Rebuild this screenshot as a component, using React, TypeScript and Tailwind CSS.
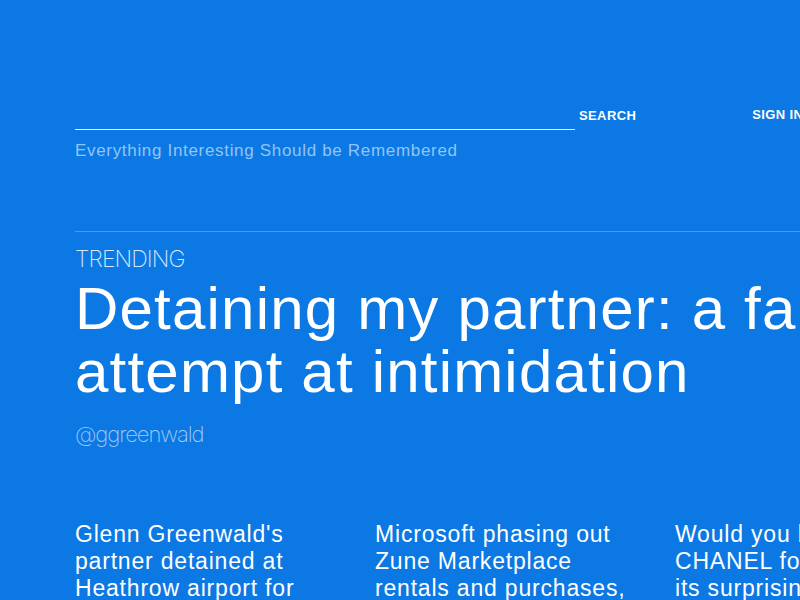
const sans = "font-['Liberation_Sans',Arial,sans-serif]";
const thin = "font-['Inter','Liberation_Sans',sans-serif]";

const stories = [
  "Glenn Greenwald's partner detained at Heathrow airport for nine hours",
  'Microsoft phasing out Zune Marketplace rentals and purchases, moving to Xbox',
  'Would you buy CHANEL for $11,000? its surprising new look',
];

export default function App() {
  return (
    <div className={`w-[800px] h-[600px] overflow-hidden bg-[#0b78e3] pl-[75px] pt-[104px] text-white ${sans}`}>
      <div className="flex items-start whitespace-nowrap">
        <div className="w-[500px] h-[26px] shrink-0 border-b border-white/90" />
        <span className="mt-[4px] ml-[4px] text-[13px] leading-[16px] font-bold tracking-[0.03em]">
          SEARCH
        </span>
        <span className="mt-[3px] ml-[116px] text-[13px] leading-[16px] font-bold tracking-[0.03em]">
          SIGN IN
        </span>
      </div>

      <p className="mt-[11px] text-[17px] leading-[20px] text-[#92c4f6] tracking-[0.04em] whitespace-nowrap">
        Everything Interesting Should be Remembered
      </p>

      <div className="mt-[70px] border-t border-white/25" />

      <div className={`mt-[14px] text-[23px] leading-[26px] font-extralight tracking-[-0.04em] text-[#d6e8fc] ${thin}`}>
        TRENDING
      </div>

      <h1 className="mt-[5px] text-[60px] leading-[63px] tracking-[0.02em] whitespace-nowrap">
        Detaining my partner: a failed
        <br />
        attempt at intimidation
      </h1>

      <div className={`mt-[18px] text-[22px] leading-[26px] font-extralight tracking-[-0.05em] text-[#9ecbf7] ${thin}`}>
        @ggreenwald
      </div>

      <div className="mt-[74px] flex">
        {stories.map((s) => (
          <p key={s} className="w-[300px] shrink-0 pr-[40px] text-[23px] leading-[27px] tracking-[0.035em]">
            {s}
          </p>
        ))}
      </div>
    </div>
  );
}
